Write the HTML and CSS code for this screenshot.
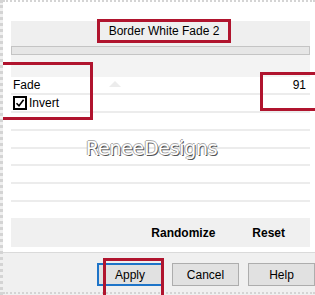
FILE: index.html
```html
<!DOCTYPE html>
<html lang="en">
<head>
  <meta charset="UTF-8">
  <title>Border White Fade 2</title>
  <link rel="stylesheet" href="styles.css">
</head>
<body>
  <div class="screen">
    <div class="dialog">
      <div class="preset">
        <span class="title">Border White Fade 2</span>
      </div>
      <div class="progress"></div>
      <div class="strip"></div>

      <div class="rows">
        <div class="row">
          <span>Fade</span>
          <span class="thumb"></span>
          <span class="value">91</span>
        </div>
        <div class="row">
          <span class="check">
            <svg width="14" height="14" viewBox="0 0 14 14">
              <rect x="1" y="1" width="12" height="12" fill="#fff" stroke="#000" stroke-width="2"/>
              <path d="M3.5 7.2 L6 9.8 L10.6 3.8" fill="none" stroke="#000" stroke-width="1.6"/>
            </svg>
            Invert
          </span>
        </div>
        <div class="row"></div>
        <div class="row"></div>
        <div class="row"></div>
        <div class="row"></div>
        <div class="row"></div>
        <div class="row"></div>
      </div>

      <div class="actions">
        <span>Randomize</span>
        <span>Reset</span>
      </div>
    </div>

    <div class="footer">
      <button class="btn default">Apply</button>
      <button class="btn">Cancel</button>
      <button class="btn">Help</button>
    </div>

    <!-- annotations -->
    <div class="mark mark-left"></div>
    <div class="mark mark-right"></div>
    <div class="mark mark-apply"></div>
    <div class="watermark">ReneeDesigns</div>
  </div>
</body>
</html>
```

FILE: styles.css
```css
body {
  margin: 0;
  font-family: "Liberation Sans", Arial, sans-serif;
  font-size: 12px;
  color: #000;
}

.screen {
  position: relative;
  width: 315px;
  height: 295px;
  overflow: hidden;
  background-color: #f0f0f0;
  border-left: 3px dotted #d4d4d4;
  box-sizing: border-box;
}

.dialog {
  background-color: white;
  border-top: 2px dotted #d4d4d4;
  border-bottom: 1px solid #dadada;
  padding: 19px 5px 5px 8px;
}

.preset {
  height: 25px;
  background-color: #efefef;
  display: flex;
  justify-content: center;
}

.title {
  box-sizing: border-box;
  width: 134px;
  height: 24px;
  margin-top: -2px;
  margin-left: 7px;
  border: 3px solid #b0142e;
  display: flex;
  align-items: center;
  justify-content: center;
  font-size: 12px;
}

.progress {
  height: 7px;
  border: 1px solid #c4c4c4;
  background-color: #e6e6e6;
}

.strip {
  height: 22px;
  background-color: #f3f3f3;
}

.rows {
  height: 141px;
  display: flex;
  flex-direction: column;
}

.row {
  flex: 1;
  display: flex;
  align-items: center;
  padding: 0 4px 0 2px;
  border-top: 2px solid #ececec;
  position: relative;
}

.row:first-child {
  border-top: none;
}

.row .value {
  margin-left: auto;
}

.thumb {
  position: absolute;
  left: 98px;
  top: 4px;
  border-left: 6px solid transparent;
  border-right: 6px solid transparent;
  border-bottom: 6px solid #ececec;
}

.check {
  display: flex;
  align-items: center;
  gap: 2px;
}

.check svg {
  display: block;
}

.actions {
  height: 29px;
  background-color: #f0f0f0;
  display: flex;
  justify-content: flex-end;
  align-items: center;
  gap: 37px;
  padding-right: 25px;
  font-weight: bold;
  font-size: 12px;
}

.footer {
  display: flex;
  justify-content: flex-end;
  gap: 9px;
  padding: 10px 0 0 0;
  height: 41px;
  box-sizing: border-box;
  border-bottom: 2px dotted #d4d4d4;
}

.btn {
  width: 67px;
  height: 23px;
  background-color: #e1e1e1;
  border: 1px solid #adadad;
  font-family: "Liberation Sans", Arial, sans-serif;
  font-size: 12px;
  padding: 0;
  color: #000;
}

.btn.default {
  width: 66px;
  border: 2px solid #1e74c8;
}

.mark {
  position: absolute;
  border: 3px solid #b0142e;
}

.mark-left {
  left: -6px;
  top: 62px;
  width: 90px;
  height: 52px;
}

.mark-right {
  left: 257px;
  top: 72px;
  width: 60px;
  height: 33px;
}

.mark-apply {
  left: 100px;
  top: 258px;
  width: 55px;
  height: 50px;
}

.watermark {
  position: absolute;
  left: 83px;
  top: 137px;
  font-family: "DejaVu Sans", sans-serif;
  font-size: 19px;
  letter-spacing: -0.3px;
  color: #ffffff;
  text-shadow: 1px 1px 0 #555, -1px 0 0 #aaa, 0 -1px 0 #aaa;
}
```
